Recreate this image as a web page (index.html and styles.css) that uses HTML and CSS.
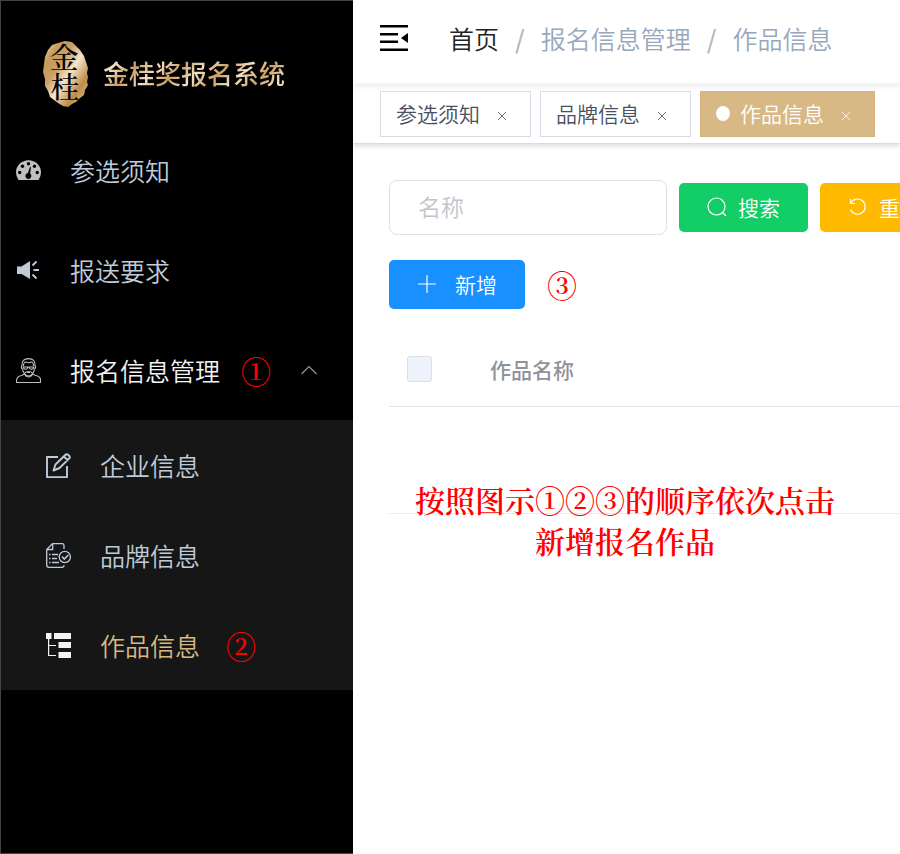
FILE: index.html
```html
<!DOCTYPE html>
<html lang="zh-CN">
<head>
<meta charset="utf-8">
<meta name="viewport" content="width=device-width, initial-scale=1">
<title>金桂奖报名系统</title>
<link rel="stylesheet" href="styles.css">
</head>
<body>
<div class="app">
  <aside class="sidebar">
    <a class="brand" href="#">
      <svg class="brand-seal" viewBox="0 0 46 68" aria-hidden="true">
        <defs>
          <linearGradient id="gold" x1="0" y1="0" x2="1" y2="1">
            <stop offset="0" stop-color="#f5dfbd"/>
            <stop offset=".2" stop-color="#c79b5c"/>
            <stop offset=".36" stop-color="#c99f64"/>
            <stop offset=".54" stop-color="#f6e4ca"/>
            <stop offset=".76" stop-color="#bd8c48"/>
            <stop offset="1" stop-color="#e8cba0"/>
          </linearGradient>
        </defs>
        <path fill="url(#gold)" d="M15 2 22 0l7 1 4 4 4 4 4 6 2 6 2 6-1 5 1 4-1 5 1 3-3 5-1 5-4 3-4 4-4 2-4 3-5-1-5-3-4-3-4-3-2-6-3-5 0-7-2-7 1-8 1-7 3-7 4-5z"/>
        <text class="seal-char" x="21" y="28" text-anchor="middle">金</text>
        <text class="seal-char" x="22" y="57" text-anchor="middle">桂</text>
      </svg>
      <span class="brand-name">金桂奖报名系统</span>
    </a>
    <nav>
      <ul class="menu">
        <li><a class="menu-item" href="#">
          <svg class="icon dim" viewBox="0 0 25 25" aria-hidden="true">
            <path fill="currentColor" d="M2.500 22A12.500 12.500 0 0 1 0 14.500a12.500 12.200 0 0 1 25 0A12.500 12.500 0 0 1 22.500 22z"/>
            <g fill="#000"><circle cx="12.500" cy="5.800" r="1.700"/><circle cx="6.500" cy="8.300" r="1.700"/><circle cx="18.500" cy="8.300" r="1.700"/><circle cx="3.700" cy="14.500" r="1.700"/><circle cx="21.300" cy="14.500" r="1.700"/><path d="m14 9 1 .3-.9 6.200a3 3 0 1 1-2.200-.5z"/></g>
          </svg>
          <span>参选须知</span></a></li>
        <li><a class="menu-item" href="#">
          <svg class="icon" viewBox="0 0 25 25" aria-hidden="true">
            <path fill="currentColor" d="M1 8.500h4.500L14 3v18l-8.500-5H1z"/>
            <path fill="none" stroke="currentColor" stroke-width="1.800" d="M17.500 12H23M16.500 7.500l4-4M16.500 16.500l4 4"/>
          </svg>
          <span>报送要求</span></a></li>
        <li>
          <a class="menu-item open" href="#">
            <svg class="icon dim" viewBox="0 0 25 25" fill="none" stroke="currentColor" stroke-width="1.100" aria-hidden="true">
              <path d="M.6 24.500v-2c0-3 2-4.500 5-5l3-1.500c1 2 2.500 3 4 3s3-1 4-3l3 1.500c3 .5 5 2 5 5v2z"/>
              <path d="M6 7.500C5.500 3 8 .6 12.500.6S19.500 3 19 7.500c1 .5.800 3-.5 3.500-.5 3.500-3 7-6 7s-5.500-3.500-6-7C5.200 10.500 5 8 6 7.500zM7.500 8c0-3 1-4 2.500-4 2 1 3.500 1 5 0 1.500 0 2.500 1 2.500 4M6.500 9h12M7.500 9c0 3 4 3 4.500 0M13 9c.5 3 4.500 3 4.500 0M9 15c1-2 6-2 7 0M11 14.500h3"/>
            </svg>
            <span>报名信息管理</span>
            <span class="step">①</span>
            <svg class="chevron" viewBox="0 0 16 10" aria-hidden="true"><path d="m.5 9 7.500-7.500L15.500 9" fill="none" stroke="currentColor" stroke-width="1.200"/></svg>
          </a>
          <ul class="submenu">
            <li><a class="submenu-item" href="#">
              <svg class="icon" viewBox="0 0 25 25" fill="none" stroke="currentColor" stroke-width="1.900" stroke-linejoin="round" aria-hidden="true">
                <path d="M12 4H1v20.200h20V13M7.500 17.500l2-6L19.500 1.700c1.500-1.500 5.500 1.500 3.800 3.700L13.500 15zM18 3.500l4 4"/>
              </svg>
              <span>企业信息</span></a></li>
            <li><a class="submenu-item" href="#">
              <svg class="icon" viewBox="0 0 25 25" fill="none" stroke="currentColor" stroke-width="1.300" aria-hidden="true">
                <path d="M18 6V2.500Q18 .6 16 .6H6.500L.7 6.500V22q0 2.300 2.300 2.300h13q2 0 2-2M6.700.8v5.700H1M3 11.500h1.500M6 11.500h6M3 15.500h1.500M6 15.500h5M3 19.500h1.500M6 19.500h7"/>
                <circle cx="18.800" cy="14" r="5.600"/><path stroke-width="1.600" d="m16 13.500 2.300 2.500 4-4"/>
              </svg>
              <span>品牌信息</span></a></li>
            <li><a class="submenu-item active" href="#">
              <svg class="icon bright" viewBox="0 0 25 25" aria-hidden="true">
                <path fill="currentColor" d="M0 0h5.500v6H0zM8 0h17v6H8zM12.500 9H25v6H12.500zM12.500 19H25v6H12.500z"/>
                <path fill="none" stroke="currentColor" stroke-width="1.200" d="M2.600 6v16.500H10M2.600 12.500H10"/>
              </svg>
              <span>作品信息</span>
              <span class="step">②</span></a></li>
          </ul>
        </li>
      </ul>
    </nav>
  </aside>

  <div class="main">
    <header class="navbar">
      <button class="fold" type="button" aria-label="收起菜单">
        <svg viewBox="0 0 28 26" aria-hidden="true"><path d="M0 0h28v2.400H0zM0 8h18v2.400H0zM0 15.600h18V18H0zM0 23.600h28V26H0zM28 8v10l-7-5z"/></svg>
      </button>
      <nav class="breadcrumb">
        <a class="home" href="#">首页</a><span class="slash">/</span><span>报名信息管理</span><span class="slash">/</span><span>作品信息</span>
      </nav>
    </header>

    <div class="tags">
      <div class="tag"><a href="#">参选须知</a><button class="close" type="button" aria-label="关闭参选须知"><svg viewBox="0 0 8 8" aria-hidden="true"><path d="m0 0 8 8M8 0 0 8"/></svg></button></div>
      <div class="tag"><a href="#">品牌信息</a><button class="close" type="button" aria-label="关闭品牌信息"><svg viewBox="0 0 8 8" aria-hidden="true"><path d="m0 0 8 8M8 0 0 8"/></svg></button></div>
      <div class="tag current"><i class="dot"></i><a href="#">作品信息</a><button class="close" type="button" aria-label="关闭作品信息"><svg viewBox="0 0 8 8" aria-hidden="true"><path d="m0 0 8 8M8 0 0 8"/></svg></button></div>
    </div>

    <main class="content">
      <form class="search">
        <input class="field" type="text" placeholder="名称" aria-label="名称">
        <button class="btn green" type="button">
          <svg viewBox="0 0 20 20" aria-hidden="true"><circle cx="9.500" cy="9.500" r="8.500"/><path d="m15.500 15.500 3.500 3.500"/></svg>搜索</button>
        <button class="btn amber" type="button">
          <svg viewBox="0 0 20 20" aria-hidden="true"><path d="M2.500 2v4.500H7M2.700 6.300A7.600 7.600 0 1 1 2.500 12.500"/></svg>重置</button>
      </form>
      <div class="toolbar">
        <button class="btn blue" type="button">
          <svg viewBox="0 0 20 20" aria-hidden="true"><path d="M10 1v18M1 10h18"/></svg>新增</button>
        <span class="step">③</span>
      </div>
      <div class="list">
        <table>
          <thead><tr><th class="pick"><input type="checkbox" disabled aria-label="全选"></th><th>作品名称</th></tr></thead>
          <tbody><tr><td colspan="2"></td></tr></tbody>
        </table>
        <p class="note">按照图示①②③的顺序依次点击<br>新增报名作品</p>
      </div>
    </main>
  </div>
</div>
</body>
</html>
```
FILE: styles.css
```css
* { box-sizing: border-box; }

body {
  margin: 0;
  background: #fff;
  font-family: "Noto Sans CJK SC", sans-serif;
  font-weight: 350;
  overflow-x: hidden;
}

a { color: inherit; text-decoration: none; }
ul { list-style: none; margin: 0; padding: 0; }
button { font: inherit; border: 0; background: none; padding: 0; cursor: pointer; }
svg { display: block; flex: none; }

.app { display: flex; min-height: 100vh; }

/* Sidebar */
.sidebar {
  flex: 0 0 353px;
  min-width: 0;
  background: #000;
  border: 1px solid #444;
  border-right: 0;
  color: #bfcbd9;
  font-size: 25px;
}

.brand {
  display: flex;
  align-items: center;
  gap: 14px;
  height: 119px;
  padding: 28px 42px 0;
}
.brand-seal { width: 46px; height: 68px; }
.seal-char {
  font-family: "Noto Serif CJK SC", "Noto Sans CJK SC", serif;
  font-size: 29px;
  font-weight: 500;
  fill: #000;
}
.brand-name {
  padding-bottom: 4px;
  font-size: 26px;
  font-weight: 500;
  white-space: nowrap;
  color: transparent;
  background: repeating-linear-gradient(135deg, #c99f64 0, #f3dfc1 16px, #c99f64 32px);
  background-clip: text;
  -webkit-background-clip: text;
}

.menu-item,
.submenu-item { display: flex; align-items: center; white-space: nowrap; }
.menu-item { height: 100px; padding: 0 36px 0 15px; gap: 29px; }
.menu-item.open { color: #f4f4f5; }
.submenu { background: #161616; }
.submenu-item { height: 90px; padding-left: 45px; gap: 29px; }
.submenu-item.active { color: #d8b983; }

.icon { width: 25px; height: 25px; }
.icon.dim { color: #bfbfbf; }
.icon.bright { color: #f4f4f5; }
.chevron { width: 16px; height: 10px; margin-left: auto; color: #909399; }

.step,
.note {
  font-family: "Noto Serif CJK SC", "Noto Serif SC", "Source Han Serif SC", "Noto Sans CJK SC", serif;
  font-size: 30px;
  font-weight: 600;
  color: #f00;
}
.step { line-height: 40px; }
.menu-item .step { margin-left: -8px; }
.submenu-item .step { margin-left: -3px; }

/* Main column */
.main { flex: 1; min-width: 0; overflow: hidden; background: #fff; }

.navbar {
  display: flex;
  align-items: center;
  gap: 41px;
  height: 84px;
  padding: 0 27px 8px;
  box-shadow: 0 1px 6px rgba(0, 21, 41, .12);
}
.fold svg { width: 28px; height: 26px; }
.breadcrumb { display: flex; white-space: nowrap; font-size: 25px; color: #97a8be; }
.breadcrumb .home { color: #222; }
.slash { margin: 0 16px; color: #b4b8c0; font-weight: 500; }

.tags {
  display: flex;
  gap: 9px;
  padding: 7px 27px 6px;
  border-bottom: 1px solid #d8dce5;
  box-shadow: 0 2px 5px rgba(0, 0, 0, .14);
}
.tag {
  display: flex;
  align-items: center;
  height: 46px;
  padding: 0 24px 2px 15px;
  border: 1px solid #d8dce5;
  color: #495060;
  font-size: 21px;
  white-space: nowrap;
}
.close { margin-left: 18px; padding-top: 5px; color: inherit; }
.close svg { width: 8px; height: 8px; overflow: visible; fill: none; stroke: currentColor; stroke-width: .8; }
.tag.current { background: #d8b986; border-color: #d4b37c; color: #fff; }
.dot { width: 14px; height: 15px; margin-right: 10px; border-radius: 50%; background: #fff; }

.content { padding: 36px 0 0 36px; }
.search { display: flex; align-items: center; gap: 12px; }
.field {
  flex: none;
  width: 278px;
  height: 55px;
  padding: 0 28px 3px;
  border: 1px solid #dcdfe6;
  border-radius: 8px;
  font: inherit;
  font-size: 23px;
}
.field::placeholder { color: #c0c4cc; opacity: 1; }

.btn {
  display: flex;
  flex: none;
  align-items: center;
  gap: 11px;
  height: 49px;
  padding: 0 28px 2px;
  border-radius: 5px;
  color: #fff;
  font-size: 21px;
}
.btn svg { width: 20px; height: 20px; fill: none; stroke: currentColor; stroke-width: 1.200; }
.green { background: #13ce66; }
.amber { background: #ffba00; }
.blue { background: #1890ff; gap: 18px; }

.toolbar { display: flex; align-items: center; gap: 22px; margin-top: 25px; }
.toolbar .step { padding-bottom: 2px; }

.list { position: relative; margin-top: 25px; }
table { width: 100%; border-collapse: collapse; }
th {
  height: 72px;
  padding: 0 0 2px;
  border-bottom: 1px solid #dfe6ec;
  color: #909399;
  font-size: 21px;
  font-weight: 500;
  text-align: left;
}
.pick { width: 101px; padding-left: 18px; }
.pick input {
  display: block;
  appearance: none;
  width: 25px;
  height: 26px;
  margin: 0;
  border: 1px solid #dcdfe6;
  border-radius: 3px;
  background: #edf2fc;
}
td { height: 107px; border-bottom: 1px solid #e6ebf5; }
.note {
  position: absolute;
  top: 145px;
  left: 26px;
  margin: 0;
  line-height: 41px;
  text-align: center;
  white-space: nowrap;
}
```
